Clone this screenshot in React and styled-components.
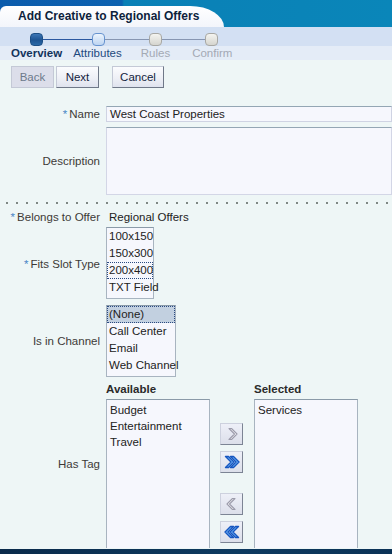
import React from 'react'
import styled, { createGlobalStyle } from "styled-components";

const GlobalStyle = createGlobalStyle`
body{
  margin:0;
  background:#eef6f6;
  font-family:"Liberation Sans", Arial, sans-serif;
  font-size:11px;
  color:#333;
}
`;

const stops = [
  { label: "Overview", state: "current", line: 0 },
  { label: "Attributes", state: "next", line: 49 },
  { label: "Rules", state: "off", line: 44 },
  { label: "Confirm", state: "off", line: 43 },
];

const slotTypes = ["100x150", "150x300", "200x400", "TXT Field"];
const channels = ["(None)", "Call Center", "Email", "Web Channel"];

function Chevron({ dir, double, active }) {
  const stroke = active ? "#1656c0" : "#9c9cab";
  const fill = active ? "#6fb0f4" : "#fafafc";
  const flip = dir === "left" ? "translate(16 0) scale(-1 1)" : undefined;
  return (
    <svg width="16" height="16" viewBox="0 0 16 16">
      <g transform={flip}>
        {double ? (
          <>
            <path d="M1.5 2.5 L7 8 L1.5 13.5 L4.5 13.5 L10 8 L4.5 2.5 Z" fill={fill} stroke={stroke} strokeWidth="1.4" strokeLinejoin="round" />
            <path d="M6.5 2.5 L12 8 L6.5 13.5 L9.5 13.5 L15 8 L9.5 2.5 Z" fill={fill} stroke={stroke} strokeWidth="1.4" strokeLinejoin="round" />
          </>
        ) : (
          <path d="M5 2.5 L10.5 8 L5 13.5 L7.5 13.5 L13 8 L7.5 2.5 Z" fill={fill} stroke={stroke} strokeWidth="1.1" strokeLinejoin="round" />
        )}
      </g>
    </svg>
  );
}

function App() {
  return (
    <Page>
      <GlobalStyle />
      <TopBar>
        <Tab>Add Creative to Regional Offers</Tab>
      </TopBar>
      <Train>
        <StopRow>
          {stops.map((s) => (
            <React.Fragment key={s.label}>
              {s.line > 0 && <Connector $w={s.line} dim={s.state === "off"} />}
              <Stop state={s.state} />
            </React.Fragment>
          ))}
        </StopRow>
        <LabelRow>
          {stops.map((s) => (
            <StopLabel key={s.label} state={s.state}>{s.label}</StopLabel>
          ))}
        </LabelRow>
      </Train>

      <Toolbar>
        <Button disabled $w={43}>Back</Button>
        <Button $w={43}>Next</Button>
        <Button $w={52} $gap>Cancel</Button>
      </Toolbar>

      <Form $top={18} $gap={5}>
        <Label $center><Req>*</Req>Name</Label>
        <TextInput>West Coast Properties</TextInput>
        <Label $center>Description</Label>
        <TextArea />
      </Form>

      <Separator />

      <Form $top={0} $gap={4}>
        <Label><Req>*</Req>Belongs to Offer</Label>
        <Value>Regional Offers</Value>

        <Label $center><Req>*</Req>Fits Slot Type</Label>
        <ListBox $w={48} $mt={-2}>
          {slotTypes.map((t) => (
            <Option key={t} focused={t === "200x400"}>{t}</Option>
          ))}
        </ListBox>

        <Label $center $mt={2}>Is in Channel</Label>
        <ListBox $w={70} $mt={2}>
          {channels.map((c) => (
            <Option key={c} focused={c === "(None)"} selected={c === "(None)"}>{c}</Option>
          ))}
        </ListBox>

        <Label $center>Has Tag</Label>
        <Shuttle>
          <Column>
            <Heading>Available</Heading>
            <ShuttleList>
              <Item>Budget</Item>
              <Item>Entertainment</Item>
              <Item>Travel</Item>
            </ShuttleList>
          </Column>
          <Arrows>
            <ArrowButton><Chevron dir="right" /></ArrowButton>
            <ArrowButton><Chevron dir="right" double active /></ArrowButton>
            <ArrowSpacer />
            <ArrowButton><Chevron dir="left" /></ArrowButton>
            <ArrowButton><Chevron dir="left" double active /></ArrowButton>
          </Arrows>
          <Column>
            <Heading>Selected</Heading>
            <ShuttleList>
              <Item>Services</Item>
            </ShuttleList>
          </Column>
        </Shuttle>
      </Form>
      <BottomBar />
    </Page>
  );
}

export default App

const Page = styled.div`
width:392px;
height:554px;
overflow:hidden;
display:flex;
flex-direction:column;
`;

const TopBar = styled.div`
height:27px;
background:linear-gradient(90deg,#0c5cac 0,#0d62b0 122px,#0a80b6 124px,#0a86b9 100%);
display:flex;
align-items:flex-end;
`;

const Tab = styled.div`
height:21px;
width:206px;
padding-left:18px;
background:linear-gradient(#ffffff,#f3f5fb);
border-top-left-radius:6px;
border-top-right-radius:34px 21px;
font-weight:bold;
font-size:12px;
color:#0e1f3c;
line-height:21px;
white-space:nowrap;
`;

const Train = styled.div`
display:flex;
flex-direction:column;
`;

const StopRow = styled.div`
height:19px;
box-sizing:border-box;
padding:5px 0 0 30px;
background:#d3e0f3;
display:flex;
align-items:center;
`;

const Stop = styled.div`
width:13px;
height:13px;
flex:none;
box-sizing:border-box;
border-radius:4px;
border:1px solid ${p => p.state === "current" ? "#1c4f86" : p.state === "next" ? "#6793cf" : "#a8a8a4"};
background:${p => p.state === "current"
  ? "linear-gradient(#3c76b6,#1d5492 55%,#2a68a6)"
  : p.state === "next"
  ? "linear-gradient(#edf4fd,#bcd4f1)"
  : "linear-gradient(#f4f4f0,#d5d5cf)"};
`;

const Connector = styled.div`
height:1px;
width:${p => p.$w}px;
flex:none;
background:${p => p.dim ? "#8796b2" : "#2b58a0"};
`;

const LabelRow = styled.div`
height:14px;
background:#e4ecf7;
display:flex;
padding-left:11px;
line-height:15px;
`;

const StopLabel = styled.div`
font-size:11.5px;
font-weight:${p => p.state === "current" ? "bold" : "normal"};
color:${p => p.state === "current" ? "#12335c" : p.state === "next" ? "#1d4a7e" : "#a3a9b4"};
margin-right:${p => p.state === "current" ? 11 : p.state === "next" ? 19 : 22}px;
`;

const Toolbar = styled.div`
display:flex;
padding:6px 0 0 11px;
`;

const Button = styled.button`
width:${p => p.$w}px;
height:22px;
padding:0;
margin-right:2px;
margin-left:${p => p.$gap ? 11 : 0}px;
font-family:inherit;
font-size:11.5px;
color:${p => p.disabled ? "#6d7a8a" : "#12223d"};
background:${p => p.disabled ? "#dcdeea" : "linear-gradient(#fbfcfe,#eef0f6 55%,#dfe3ee)"};
border:1px solid #c4c9d6;
border-right-color:${p => p.disabled ? "#c4c9d6" : "#6f7888"};
border-bottom-color:${p => p.disabled ? "#c4c9d6" : "#6f7888"};
`;

const Form = styled.div`
display:grid;
grid-template-columns:100px 1fr;
column-gap:6px;
row-gap:${p => p.$gap}px;
margin-top:${p => p.$top}px;
`;

const Label = styled.div`
display:flex;
align-items:${p => p.$center ? "center" : "flex-start"};
justify-content:flex-end;
margin-top:${p => p.$mt || 0}px;
color:#3d3a36;
font-size:11.5px;
line-height:15px;
white-space:nowrap;
`;

const Req = styled.span`
color:#4a86c6;
margin-right:2px;
`;

const TextInput = styled.div`
height:16px;
box-sizing:border-box;
border:1px solid #cfd3e3;
border-top-color:#94a6b4;
background:#f6f7fd;
padding-left:3px;
line-height:14px;
font-size:11.5px;
color:#222;
`;

const TextArea = styled.div`
height:68px;
box-sizing:border-box;
border:1px solid #d3d6e6;
border-top-color:#94a6b4;
background:#f6f7fd;
`;

const Separator = styled.div`
height:2px;
margin:7px 0 6px 6px;
background-image:linear-gradient(90deg,#7f8884 2px,transparent 2px);
background-size:10px 2px;
`;

const Value = styled.div`
line-height:15px;
padding-left:3px;
font-size:11.5px;
color:#222;
`;

const ListBox = styled.div`
width:${p => p.$w}px;
margin-top:${p => p.$mt || 0}px;
box-sizing:border-box;
border:1px solid #a8b4c0;
border-top-color:#8a9aa8;
background:#f6f7fd;
padding:0 0 2px;
`;

const Option = styled.div`
height:17px;
line-height:17px;
padding-left:2px;
font-size:11.5px;
color:#222;
white-space:nowrap;
box-sizing:border-box;
outline:${p => p.focused ? "1px dotted #2a4a80" : "none"};
outline-offset:-1px;
background:${p => p.selected ? "#c2d0e0" : "transparent"};
`;

const Shuttle = styled.div`
display:flex;
align-items:flex-start;
`;

const Column = styled.div`
display:flex;
flex-direction:column;
`;

const Heading = styled.div`
font-weight:bold;
font-size:11.5px;
color:#2a2a2a;
line-height:16px;
height:18px;
`;

const ShuttleList = styled.div`
width:104px;
height:149px;
box-sizing:border-box;
border:1px solid #a8b4c0;
border-top-color:#8a9aa8;
border-bottom:none;
background:#f6f7fd;
padding:2px 3px;
`;

const Item = styled.div`
line-height:16px;
font-size:11.5px;
color:#222;
`;

const Arrows = styled.div`
display:flex;
flex-direction:column;
gap:6px;
padding:42px 11px 0 10px;
`;

const ArrowSpacer = styled.div`
height:8px;
`;

const ArrowButton = styled.div`
width:23px;
height:22px;
box-sizing:border-box;
display:flex;
align-items:center;
justify-content:center;
background:linear-gradient(#eef0f8,#dcdfea);
border:1px solid #cdd1de;
border-right-color:#7c8494;
border-bottom-color:#7c8494;
`;

const BottomBar = styled.div`
margin-top:auto;
height:5px;
background:linear-gradient(90deg,#0a2a4a,#0d3a60 60%,#0b3256);
`;
